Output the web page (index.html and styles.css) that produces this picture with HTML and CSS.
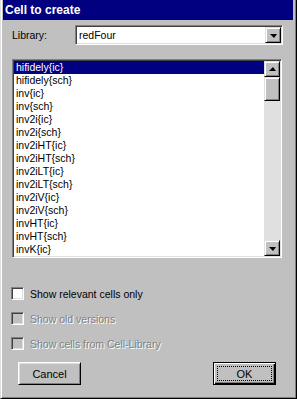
FILE: index.html
```html
<!DOCTYPE html>
<html>
<head>
<meta charset="utf-8">
<title>Cell to create</title>
<link rel="stylesheet" href="styles.css">
</head>
<body>
<div class="window">
  <div class="titlebar">Cell to create</div>
  <div class="lib-row">
    <span class="lib-label">Library:</span>
    <div class="combo">
      <span class="combo-text">redFour</span>
      <span class="btn3d arrow-btn"><span class="tri-down"></span></span>
    </div>
  </div>
  <div class="listbox">
    <div class="items">
      <div class="item selected">hifidely{ic}</div>
      <div class="item">hifidely{sch}</div>
      <div class="item">inv{ic}</div>
      <div class="item">inv{sch}</div>
      <div class="item">inv2i{ic}</div>
      <div class="item">inv2i{sch}</div>
      <div class="item">inv2iHT{ic}</div>
      <div class="item">inv2iHT{sch}</div>
      <div class="item">inv2iLT{ic}</div>
      <div class="item">inv2iLT{sch}</div>
      <div class="item">inv2iV{ic}</div>
      <div class="item">inv2iV{sch}</div>
      <div class="item">invHT{ic}</div>
      <div class="item">invHT{sch}</div>
      <div class="item">invK{ic}</div>
    </div>
    <div class="scrollbar">
      <span class="btn3d arrow-btn"><span class="tri-up"></span></span>
      <span class="btn3d thumb"></span>
      <span class="track"></span>
      <span class="btn3d arrow-btn"><span class="tri-down"></span></span>
    </div>
  </div>
  <div class="checks">
    <label class="check"><span class="box"></span><span class="check-text">Show relevant cells only</span></label>
    <label class="check disabled"><span class="box"></span><span class="check-text">Show old versions</span></label>
    <label class="check disabled"><span class="box"></span><span class="check-text">Show cells from Cell-Library</span></label>
  </div>
  <div class="buttons">
    <div class="button">Cancel</div>
    <div class="button default"><span class="focus">OK</span></div>
  </div>
</div>
</body>
</html>
```
FILE: styles.css
```css
html, body {
  margin: 0;
  padding: 0;
  background: #c0c0c0;
}
body {
  width: 297px;
  height: 399px;
  overflow: hidden;
  font-family: "Liberation Sans", Arial, sans-serif;
  font-size: 11px;
  color: #000;
}
.window {
  box-sizing: border-box;
  width: 297px;
  height: 399px;
  background: #c0c0c0;
  border-left: 1px solid #dfdfdf;
  border-right: 1px solid #000;
  border-bottom: 1px solid #000;
  box-shadow: inset 1px 0 #fff, inset -1px -1px #808080;
  padding: 0 3px 0 2px;
  display: flex;
  flex-direction: column;
}
.titlebar {
  height: 20px;
  line-height: 20px;
  background: #000080;
  color: #fff;
  font-weight: bold;
  font-size: 12px;
  padding-left: 2px;
}
.lib-row {
  display: flex;
  align-items: center;
  margin-top: 5px;
  height: 20px;
}
.lib-label {
  width: 63px;
  padding-left: 9px;
  box-sizing: content-box;
  font-size: 10.5px;
  margin-top: -1px;
}
.combo {
  box-sizing: border-box;
  width: 208px;
  height: 20px;
  background: #fff;
  border-top: 1px solid #808080;
  border-left: 1px solid #808080;
  border-right: 1px solid #fff;
  border-bottom: 1px solid #fff;
  box-shadow: inset 1px 1px #404040, inset -1px -1px #dfdfdf;
  padding: 1px;
  display: flex;
  align-items: center;
}
.combo-text {
  flex: 1;
  padding-left: 2px;
  font-size: 10.5px;
}
.btn3d {
  box-sizing: border-box;
  display: flex;
  align-items: center;
  justify-content: center;
  background: #c0c0c0;
  border-top: 1px solid #dfdfdf;
  border-left: 1px solid #dfdfdf;
  border-right: 1px solid #000;
  border-bottom: 1px solid #000;
  box-shadow: inset 1px 1px #fff, inset -1px -1px #808080;
}
.arrow-btn {
  width: 16px;
  height: 16px;
  flex: none;
}
.tri-down, .tri-up {
  width: 0;
  height: 0;
  border-left: 4px solid transparent;
  border-right: 3px solid transparent;
}
.tri-down {
  border-top: 4px solid #000;
  margin-top: 1px;
}
.tri-up {
  border-bottom: 4px solid #000;
  margin-top: -1px;
}
.listbox {
  box-sizing: border-box;
  width: 270px;
  height: 199px;
  margin: 14px 0 0 9px;
  background: #fff;
  border-top: 1px solid #808080;
  border-left: 1px solid #808080;
  border-right: 1px solid #fff;
  border-bottom: 1px solid #fff;
  box-shadow: inset 1px 1px #404040, inset -1px -1px #dfdfdf;
  padding: 1px;
  display: flex;
}
.items {
  flex: 1;
  overflow: hidden;
}
.item {
  height: 13px;
  line-height: 13px;
  padding-left: 2px;
  font-size: 10.5px;
  white-space: nowrap;
}
.item.selected {
  background: #000080;
  color: #fff;
}
.scrollbar {
  width: 16px;
  display: flex;
  flex-direction: column;
}
.thumb {
  height: 24px;
  width: 16px;
  flex: none;
}
.track {
  flex: 1;
  background: #e0e0e0;
}
.checks {
  margin: 29px 0 0 8px;
  display: flex;
  flex-direction: column;
  gap: 12px;
}
.check {
  display: flex;
  align-items: center;
  height: 13px;
  gap: 6px;
  font-size: 10.5px;
}
.box {
  box-sizing: border-box;
  width: 13px;
  height: 13px;
  flex: none;
  background: #fff;
  border-top: 1px solid #808080;
  border-left: 1px solid #808080;
  border-right: 1px solid #fff;
  border-bottom: 1px solid #fff;
  box-shadow: inset 1px 1px #404040, inset -1px -1px #dfdfdf;
}
.check.disabled .box {
  background: #c0c0c0;
}
.check.disabled .check-text {
  color: #808080;
  text-shadow: 1px 1px 0 #fff;
}
.buttons {
  margin-top: 12px;
  display: flex;
  justify-content: space-between;
  padding: 0 17px 0 15px;
}
.button {
  box-sizing: border-box;
  width: 63px;
  height: 23px;
  display: flex;
  align-items: center;
  justify-content: center;
  font-size: 11px;
  background: #c0c0c0;
  border-top: 1px solid #fff;
  border-left: 1px solid #fff;
  border-right: 1px solid #000;
  border-bottom: 1px solid #000;
  box-shadow: inset 1px 1px #dfdfdf, inset -1px -1px #808080;
}
.button.default {
  border: 1px solid #000;
  box-shadow: inset 1px 1px #fff, inset -1px -1px #000, inset -2px -2px #808080;
  padding: 3px;
}
.focus {
  flex: 1;
  align-self: stretch;
  display: flex;
  align-items: center;
  justify-content: center;
  border: 1px dotted #000;
}
```
